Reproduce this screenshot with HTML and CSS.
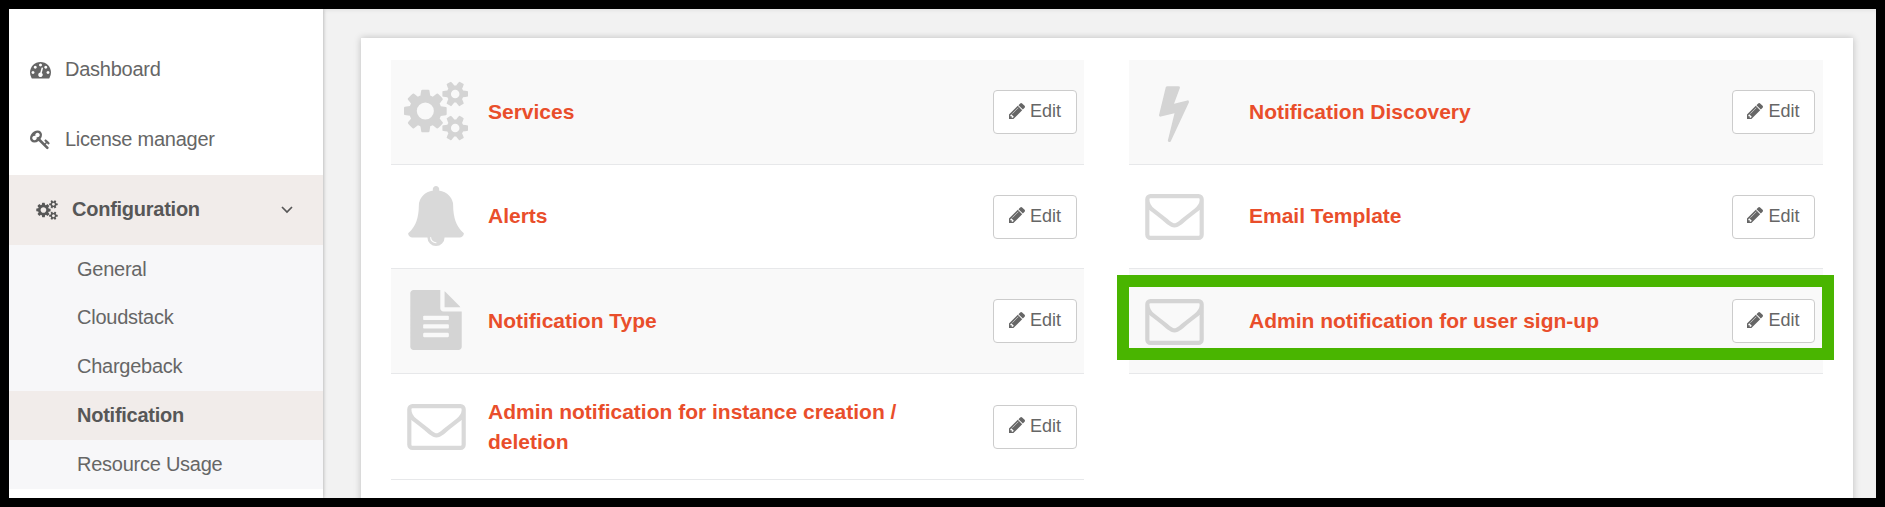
FILE: index.html
```html
<!DOCTYPE html>
<html lang="en">
<head>
<meta charset="utf-8">
<title>Configuration - Notification</title>
<link rel="stylesheet" href="styles.css">
</head>
<body>
<svg class="sprite" aria-hidden="true">
  <symbol id="cogs" viewBox="0 0 1920 1792"><path d="M896 896q0-106-75-181t-181-75-181 75-75 181 75 181 181 75 181-75 75-181zm768 512q0-52-38-90t-90-38-90 38-38 90q0 53 37.5 90.5t90.5 37.5 90.5-37.5 37.5-90.5zm0-1024q0-52-38-90t-90-38-90 38-38 90q0 53 37.5 90.5t90.5 37.5 90.5-37.5 37.5-90.5zm-384 421v185q0 10-7 19.5t-16 10.5l-155 24q-11 35-32 76 34 48 90 115 7 11 7 20 0 12-7 19-23 30-82.500 89.500t-78.500 59.500q-11 0-21-7l-115-90q-37 19-77 31-11 108-23 155-7 24-30 24h-186q-11 0-20-7.500t-10-17.500l-23-153q-34-10-75-31l-118 89q-7 7-20 7-11 0-21-8-144-133-144-160 0-9 7-19 10-14 41-53t47-61q-23-44-35-82l-152-24q-10-1-17-9.500t-7-19.500v-185q0-10 7-19.500t16-10.500l155-24q11-35 32-76-34-48-90-115-7-11-7-20 0-12 7-20 22-30 82-89t79-59q11 0 21 7l115 90q34-18 77-32 11-108 23-154 7-24 30-24h186q11 0 20 7.500t10 17.500l23 153q34 10 75 31l118-89q8-7 20-7 11 0 21 8 144 133 144 160 0 8-7 19-12 16-42 54t-45 60q23 48 34 82l152 23q10 2 17 10.500t7 19.500zm640 533v140q0 16-149 31-12 27-30 52 51 113 51 138 0 4-4 7-122 71-124 71-8 0-46-47t-52-68q-20 2-30 2t-30-2q-14 21-52 68t-46 47q-2 0-124-71-4-3-4-7 0-25 51-138-18-25-30-52-149-15-149-31v-140q0-16 149-31 13-29 30-52-51-113-51-138 0-4 4-7 4-2 35-20t59-34 30-16q8 0 46 46.500t52 67.500q20-2 30-2t30 2q51-71 92-112l6-2q4 0 124 70 4 3 4 7 0 25-51 138 17 23 30 52 149 15 149 31zm0-1024v140q0 16-149 31-12 27-30 52 51 113 51 138 0 4-4 7-122 71-124 71-8 0-46-47t-52-68q-20 2-30 2t-30-2q-14 21-52 68t-46 47q-2 0-124-71-4-3-4-7 0-25 51-138-18-25-30-52-149-15-149-31v-140q0-16 149-31 13-29 30-52-51-113-51-138 0-4 4-7 4-2 35-20t59-34 30-16q8 0 46 46.500t52 67.500q20-2 30-2t30 2q51-71 92-112l6-2q4 0 124 70 4 3 4 7 0 25-51 138 17 23 30 52 149 15 149 31z"/></symbol>
  <symbol id="bell" viewBox="0 0 1792 1792"><path d="M912 1696q0-16-16-16-59 0-101.500-42.500t-42.500-101.500q0-16-16-16t-16 16q0 73 51.500 124.500t124.500 51.500q16 0 16-16zm816-288q0 52-38 90t-90 38h-448q0 106-75 181t-181 75-181-75-75-181h-448q-52 0-90-38t-38-90q50-42 91-88t85-119.500 74.500-158.500 50-206 19.500-260q0-152 117-282.500t307-158.500q-8-19-8-39 0-40 28-68t68-28 68 28 28 68q0 20-8 39 190 28 307 158.500t117 282.500q0 139 19.500 260t50 206 74.500 158.500 85 119.500 91 88z"/></symbol>
  <symbol id="file" viewBox="0 0 1792 1792"><path d="M1596 476q14 14 28 36h-472v-472q22 14 36 28zm-476 164h544v1056q0 40-28 68t-68 28h-1344q-40 0-68-28t-28-68v-1600q0-40 28-68t68-28h800v544q0 40 28 68t68 28zm160 736v-64q0-14-9-23t-23-9h-704q-14 0-23 9t-9 23v64q0 14 9 23t23 9h704q14 0 23-9t9-23zm0-256v-64q0-14-9-23t-23-9h-704q-14 0-23 9t-9 23v64q0 14 9 23t23 9h704q14 0 23-9t9-23zm0-256v-64q0-14-9-23t-23-9h-704q-14 0-23 9t-9 23v64q0 14 9 23t23 9h704q14 0 23-9t9-23z"/></symbol>
  <symbol id="envelope" viewBox="0 256 1792 1408"><path d="M1664 1504v-768q-32 36-69 66-268 206-426 338-51 43-83 67t-86.500 48.500-102.500 24.500h-2q-48 0-102.500-24.500t-86.500-48.500-83-67q-158-132-426-338-37-30-69-66v768q0 13 9.500 22.500t22.500 9.500h1472q13 0 22.500-9.500t9.500-22.500zm0-1051v-24.500l-.5-13-3-12.500-5.500-9-9-7.500-14-2.500h-1472q-13 0-22.500 9.500t-9.500 22.500q0 168 147 284 193 152 401 317 6 5 35 29.500t46 37.500 44.500 31.500 50.500 27.500 43 9h2q20 0 43-9t50.500-27.500 44.500-31.500 46-37.500 35-29.500q208-165 401-317 54-43 100.500-115.500t46.500-131.500zm128-37v1088q0 66-47 113t-113 47h-1472q-66 0-113-47t-47-113v-1088q0-66 47-113t113-47h1472q66 0 113 47t47 113z"/></symbol>
  <symbol id="bolt" viewBox="0 0 1792 1792"><path d="M1333 566q18 20 7 44l-540 1157q-13 25-42 25-4 0-14-2-17-5-25.500-19t-4.500-30l197-808-406 101q-4 1-12 1-18 0-31-11-18-15-13-39l201-825q4-16 18-26t32-10h328q19 0 32 12.500t13 29.500q0 8-5 18l-171 463 396-98q8-2 12-2 19 0 34 15z"/></symbol>
  <symbol id="pencil" viewBox="128 149 1515 1515"><path d="M491 1536l91-91-235-235-91 91v107h128v128h107zm523-928q0-22-22-22-10 0-17 7l-542 542q-7 7-7 17 0 22 22 22 10 0 17-7l542-542q7-7 7-17zm-54-192l416 416-832 832h-416v-416zm683 96q0 53-37 90l-166 166-416-416 166-165q36-38 90-38 53 0 91 38l235 234q37 39 37 91z"/></symbol>
  <symbol id="key" viewBox="0 0 1792 1792"><path d="M832 512q0-80-56-136t-136-56-136 56-56 136q0 42 19 83-41-19-83-19-80 0-136 56t-56 136 56 136 136 56 136-56 56-136q0-42-19-83 41 19 83 19 80 0 136-56t56-136zm851 704q0 17-49 66t-66 49q-9 0-28.500-16t-36.500-33-38.500-40-24.500-26l-96 96 220 220q28 28 28 68 0 42-39 81t-81 39q-40 0-68-28l-671-671q-176 131-365 131-163 0-265.500-102.500t-102.500-265.500q0-160 95-313t248-248 313-95q163 0 265.500 102.500t102.500 265.500q0 189-131 365l355 355 96-96q-3-3-26-24.500t-40-38.500-33-36.500-16-28.500q0-17 49-66t66-49q13 0 23 10 6 6 46 44.500t82 79.500 86.500 86 73 78 28.500 41z"/></symbol>
  <symbol id="gauge" viewBox="0 0 1792 1792"><path d="M384 1152q0-53-37.500-90.500t-90.500-37.500-90.500 37.500-37.500 90.500 37.500 90.500 90.500 37.500 90.500-37.500 37.500-90.500zm192-448q0-53-37.500-90.500t-90.500-37.500-90.500 37.500-37.500 90.500 37.500 90.500 90.500 37.500 90.500-37.500 37.500-90.500zm428 481l101-382q6-26-7.500-48.500t-38.500-29.500-48 6.500-30 39.500l-101 382q-60 5-107 43.500t-63 98.500q-20 77 20 146t117 89 146-20 89-117q16-60-6-117t-72-91zm660-33q0-53-37.500-90.500t-90.500-37.500-90.500 37.500-37.500 90.500 37.500 90.500 90.500 37.500 90.500-37.500 37.500-90.500zm-640-640q0-53-37.500-90.500t-90.500-37.500-90.500 37.500-37.500 90.500 37.500 90.500 90.500 37.500 90.500-37.500 37.500-90.500zm448 192q0-53-37.500-90.500t-90.500-37.500-90.500 37.500-37.500 90.500 37.500 90.500 90.500 37.500 90.500-37.500 37.500-90.500zm320 448q0 261-141 483-19 29-54 29h-1402q-35 0-54-29-141-221-141-483 0-182 71-348t191-286 286-191 348-71 348 71 286 191 191 286 71 348z"/></symbol>
</svg>

<div class="frame">
  <nav class="sidebar">
    <a class="nav-item"><svg class="nav-icon"><use href="#gauge"/></svg><span>Dashboard</span></a>
    <a class="nav-item nav-license"><svg class="nav-icon"><use href="#key"/></svg><span>License manager</span></a>
    <a class="nav-item nav-open"><svg class="nav-icon nav-cogs"><use href="#cogs"/></svg><span>Configuration</span>
      <svg class="nav-arrow" viewBox="0 0 12 8"><path d="M1 1l5 5 5-5"/></svg></a>
    <div class="submenu">
      <a class="sub-item sub-first">General</a>
      <a class="sub-item">Cloudstack</a>
      <a class="sub-item">Chargeback</a>
      <a class="sub-item sub-active">Notification</a>
      <a class="sub-item">Resource Usage</a>
    </div>
  </nav>
  <main class="content">
    <section class="card">
      <div class="column">
        <div class="row shaded r1"><div class="icon"><svg class="i-cogs"><use href="#cogs"/></svg></div><h3 class="title">Services</h3><a class="edit"><svg class="pencil"><use href="#pencil"/></svg><span class="label">Edit</span></a></div>
        <div class="row r2"><div class="icon"><svg class="i-square"><use href="#bell"/></svg></div><h3 class="title">Alerts</h3><a class="edit"><svg class="pencil"><use href="#pencil"/></svg><span class="label">Edit</span></a></div>
        <div class="row shaded r3"><div class="icon"><svg class="i-square"><use href="#file"/></svg></div><h3 class="title">Notification Type</h3><a class="edit"><svg class="pencil"><use href="#pencil"/></svg><span class="label">Edit</span></a></div>
        <div class="row r4"><div class="icon"><svg class="i-envelope"><use href="#envelope"/></svg></div><h3 class="title">Admin notification for instance creation / deletion</h3><a class="edit"><svg class="pencil"><use href="#pencil"/></svg><span class="label">Edit</span></a></div>
      </div>
      <div class="column column-right">
        <div class="row shaded r1"><div class="icon"><svg class="i-bolt"><use href="#bolt"/></svg></div><h3 class="title">Notification Discovery</h3><a class="edit"><svg class="pencil"><use href="#pencil"/></svg><span class="label">Edit</span></a></div>
        <div class="row r2"><div class="icon"><svg class="i-envelope"><use href="#envelope"/></svg></div><h3 class="title">Email Template</h3><a class="edit"><svg class="pencil"><use href="#pencil"/></svg><span class="label">Edit</span></a></div>
        <div class="row shaded r3"><div class="icon"><svg class="i-envelope"><use href="#envelope"/></svg></div><h3 class="title">Admin notification for user sign-up</h3><a class="edit"><svg class="pencil"><use href="#pencil"/></svg><span class="label">Edit</span></a><div class="highlight"></div></div>
      </div>
    </section>
  </main>
</div>
</body>
</html>
```
FILE: styles.css
```css
* { box-sizing: border-box; }

body {
  margin: 0;
  font-family: "Liberation Sans", Arial, sans-serif;
  color: #666;
}

.sprite { display: none; }

.frame {
  display: flex;
  width: 1885px;
  height: 507px;
  border: 9px solid #000;
  background: #f2f2f2;
  overflow: hidden;
}

/* Sidebar */
.sidebar {
  flex: none;
  width: 314px;
  height: 489px;
  padding-top: 26px;
  background: #fff;
  box-shadow: 0 0 4px rgba(0, 0, 0, .3);
  font-size: 20px;
  letter-spacing: -.25px;
  overflow: hidden;
}

.nav-item {
  display: flex;
  align-items: center;
  height: 70px;
  padding: 0 30px 2px 21px;
}

.nav-license { padding-bottom: 1px; }

.nav-icon {
  width: 21px;
  height: 21px;
  margin-right: 14px;
  fill: #666;
}

.nav-open {
  padding: 0 30px 1px 27px;
  background: #f1ecea;
  color: #575757;
  font-weight: bold;
}

.nav-cogs {
  width: 22px;
  height: 20px;
  fill: #575757;
}

.nav-arrow {
  width: 12px;
  height: 8px;
  margin-left: auto;
  fill: none;
  stroke: #575757;
  stroke-width: 1.7;
}

.submenu { background: #f7f7f9; }

.sub-item {
  display: flex;
  align-items: center;
  height: 49px;
  padding: 0 0 1px 68px;
}

.sub-first {
  height: 48px;
  padding-bottom: 0;
}

.sub-active {
  background: #f1ecea;
  color: #575757;
  font-weight: bold;
}

/* Settings card */
.content {
  flex: 1;
  padding: 29px 23px 0 38px;
  box-shadow: inset 0 3px 4px -2px rgba(0, 0, 0, .08);
}

.card {
  display: flex;
  gap: 45px;
  height: 520px;
  padding: 22px 30px 0;
  background: #fff;
  box-shadow: 0 0 7px rgba(0, 0, 0, .22);
}

.column { width: 693px; }
.column-right { width: 694px; }

.row {
  position: relative;
  display: flex;
  align-items: center;
  height: 105px;
  padding-right: 7px;
  border-bottom: 1px solid #e7e8ea;
}

.column-right .row { padding-right: 8px; }
.shaded { background: #f9f9f9; }
.r2 { height: 104px; }
.r4 { height: 106px; }

.icon {
  display: flex;
  justify-content: center;
  flex: none;
  width: 90px;
  margin-right: 7px;
}

.column-right .icon { margin-right: 30px; }
.icon svg { fill: #d9d9d9; }
.shaded .icon svg { fill: #d4d4d4; }

.i-cogs { width: 64px; height: 60px; margin-bottom: 2px; }
.i-square { width: 60px; height: 60px; margin-bottom: 2px; }
.i-bolt { width: 60px; height: 60px; margin-bottom: 1px; }
.i-envelope { width: 59px; height: 46px; margin-top: 1px; }

.title {
  margin: 0;
  width: 430px;
  color: #e94e2b;
  font-size: 21px;
  line-height: 30px;
}

.r2 .title { padding-bottom: 1px; }

.edit {
  display: flex;
  align-items: center;
  justify-content: center;
  flex: none;
  width: 84px;
  height: 44px;
  margin-left: auto;
  padding-bottom: 3px;
  border: 1px solid #ccc;
  border-radius: 4px;
  background: #fff;
  font-size: 18px;
}

.column-right .edit { width: 83px; }

.pencil {
  width: 16px;
  height: 16px;
  margin-right: 5px;
  fill: #666;
}

.label { padding-top: 2px; }

/* Callout frame around the selected row */
.highlight {
  position: absolute;
  top: 6px;
  left: -12px;
  width: 717px;
  height: 85px;
  border: 12px solid #49b500;
}
```
